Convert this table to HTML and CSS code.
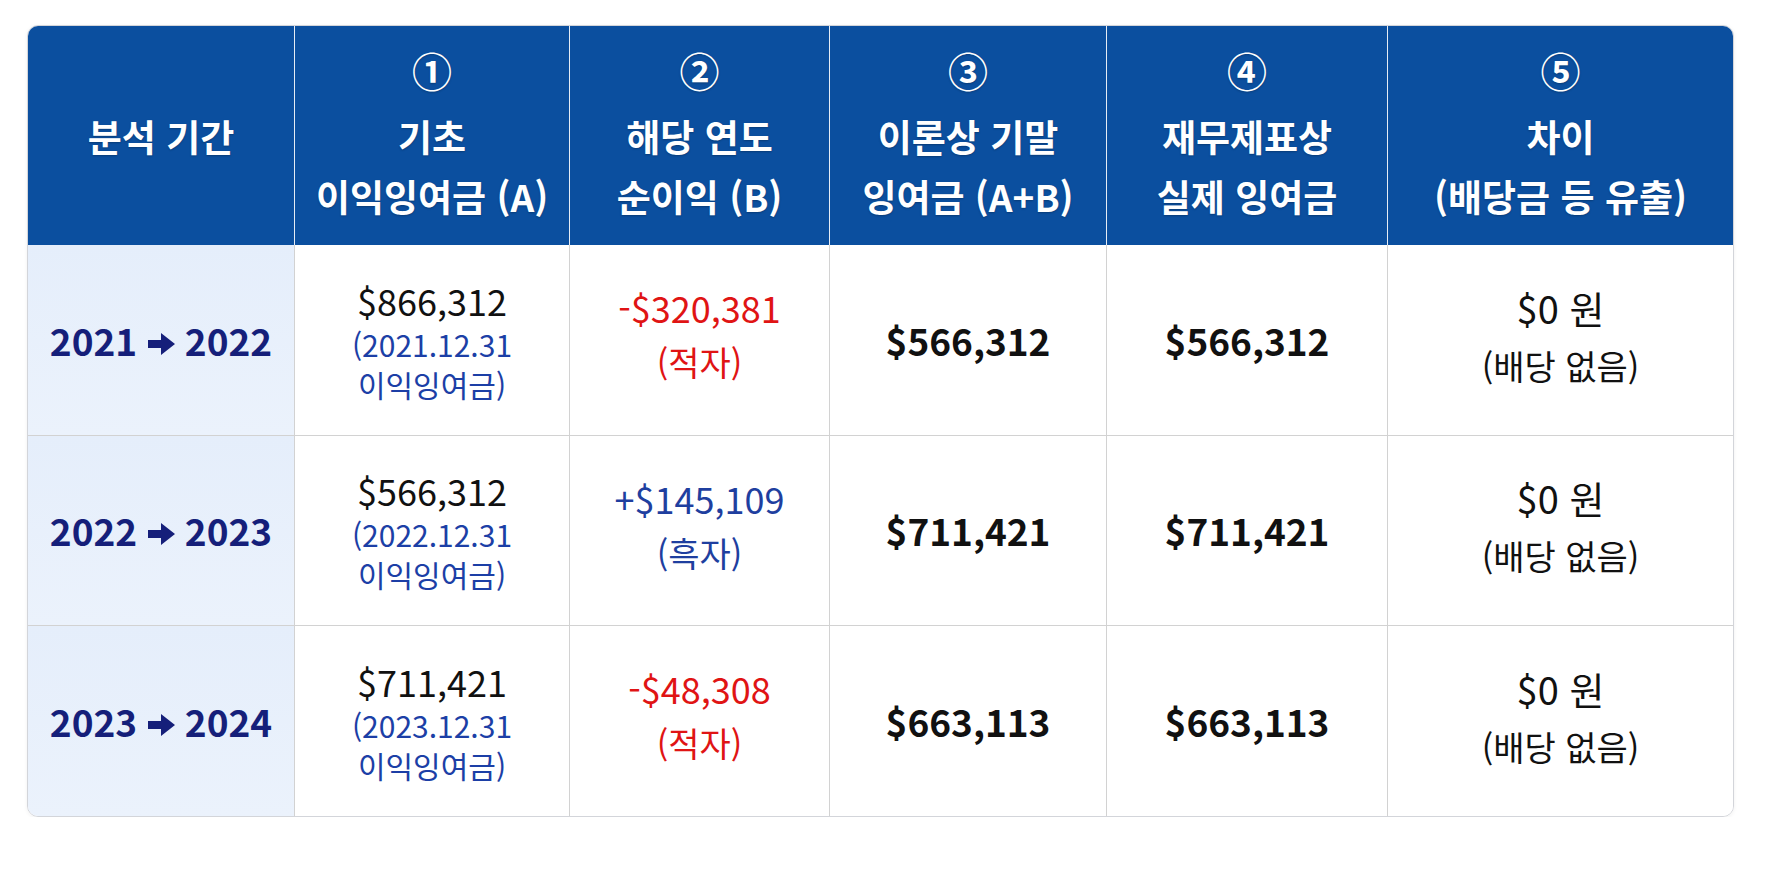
FILE: index.html
```html
<!DOCTYPE html>
<html lang="ko">
<head>
<meta charset="utf-8">
<title>이익잉여금 분석</title>
<link rel="stylesheet" href="styles.css">
</head>
<body>
<div class="wrap">
<table class="re-table">
  <colgroup>
    <col class="c1"><col class="c2"><col class="c3"><col class="c4"><col class="c5"><col class="c6">
  </colgroup>
  <thead>
    <tr>
      <th><span class="hl">분석 기간</span></th>
      <th><span class="num">①</span><span class="hl">기초</span><span class="hl">이익잉여금 (A)</span></th>
      <th><span class="num">②</span><span class="hl">해당 연도</span><span class="hl">순이익 (B)</span></th>
      <th><span class="num">③</span><span class="hl">이론상 기말</span><span class="hl">잉여금 (A+B)</span></th>
      <th><span class="num">④</span><span class="hl">재무제표상</span><span class="hl">실제 잉여금</span></th>
      <th><span class="num">⑤</span><span class="hl">차이</span><span class="hl">(배당금 등 유출)</span></th>
    </tr>
  </thead>
  <tbody>
    <tr>
      <td class="period">2021 <svg class="arrow" viewBox="0 0 27 24" aria-hidden="true"><path d="M0 8h13V1l14 11-14 11v-7H0z"/></svg> 2022</td>
      <td><div class="main">$866,312</div><div class="sub">(2021.12.31</div><div class="sub">이익잉여금)</div></td>
      <td class="neg"><div class="main">-$320,381</div><div class="tag">(적자)</div></td>
      <td class="bold">$566,312</td>
      <td class="bold">$566,312</td>
      <td class="div"><div class="main">$0 원</div><div class="tag">(배당 없음)</div></td>
    </tr>
    <tr>
      <td class="period">2022 <svg class="arrow" viewBox="0 0 27 24" aria-hidden="true"><path d="M0 8h13V1l14 11-14 11v-7H0z"/></svg> 2023</td>
      <td><div class="main">$566,312</div><div class="sub">(2022.12.31</div><div class="sub">이익잉여금)</div></td>
      <td class="pos"><div class="main">+$145,109</div><div class="tag">(흑자)</div></td>
      <td class="bold">$711,421</td>
      <td class="bold">$711,421</td>
      <td class="div"><div class="main">$0 원</div><div class="tag">(배당 없음)</div></td>
    </tr>
    <tr>
      <td class="period">2023 <svg class="arrow" viewBox="0 0 27 24" aria-hidden="true"><path d="M0 8h13V1l14 11-14 11v-7H0z"/></svg> 2024</td>
      <td><div class="main">$711,421</div><div class="sub">(2023.12.31</div><div class="sub">이익잉여금)</div></td>
      <td class="neg"><div class="main">-$48,308</div><div class="tag">(적자)</div></td>
      <td class="bold">$663,113</td>
      <td class="bold">$663,113</td>
      <td class="div"><div class="main">$0 원</div><div class="tag">(배당 없음)</div></td>
    </tr>
  </tbody>
</table>
</div>
</body>
</html>
```
FILE: styles.css
```css
html, body {
  margin: 0;
  padding: 0;
  background: #ffffff;
}
body {
  font-family: "Noto Sans CJK KR", "Noto Sans", sans-serif;
  color: #111111;
}
.wrap {
  padding: 25px 42px 0 27px;
}
.re-table {
  width: 1705px;
  table-layout: fixed;
  border-collapse: separate;
  border-spacing: 0;
  border: 1.5px solid #d3d5da;
  border-radius: 11px;
  overflow: hidden;
  box-shadow: 0 1px 4px rgba(0, 0, 0, 0.06);
}
.c1 { width: 267px; }
.c2 { width: 275px; }
.c3 { width: 260px; }
.c4 { width: 277px; }
.c5 { width: 281px; }
.c6 { width: 345px; }

.re-table th {
  height: 219px;
  background: #0b4f9f;
  color: #ffffff;
  font-weight: 700;
  font-size: 37px;
  line-height: 60px;
  text-align: center;
  vertical-align: middle;
  padding: 0;
  border-right: 1.5px solid #e6ecf5;
  text-shadow: 0 1px 2px rgba(0, 0, 0, 0.25);
}
.re-table th:last-child { border-right: none; }
.re-table th span { display: block; }
.re-table th .num {
  font-weight: 700;
  font-size: 40px;
  line-height: 60px;
  margin-top: -6px;
  margin-bottom: 6px;
}

.re-table td {
  height: 189.5px;
  padding: 0;
  text-align: center;
  vertical-align: middle;
  font-size: 36px;
  background: #ffffff;
  border-right: 1.5px solid #d2d2d2;
  border-bottom: 1.5px solid #d2d2d2;
}
.re-table td:last-child { border-right: none; }
.re-table tbody tr:last-child td { border-bottom: none; }

.re-table td.period {
  background: linear-gradient(180deg, #e5eefb 0%, #ebf2fc 100%);
  color: #151f7a;
  font-weight: 700;
  font-size: 37px;
  white-space: nowrap;
}
.arrow {
  width: 27px;
  height: 24px;
  fill: #151f7a;
  vertical-align: 0;
}
.main {
  font-size: 36px;
  line-height: 48px;
}
.sub {
  font-size: 30px;
  line-height: 40px;
  color: #1c3fa6;
}
.tag {
  font-size: 34px;
  line-height: 50px;
  margin-top: 6px;
}
.neg .tag,
.pos .tag {
  margin-bottom: 9px;
}
.div .main {
  font-size: 38px;
  line-height: 50px;
}
.div .tag {
  margin-top: 8px;
  margin-bottom: 6px;
}
.neg { color: #e01414; }
.pos { color: #1f3f9f; }
.re-table td.bold {
  font-weight: 700;
  font-size: 37px;
  color: #111111;
}
```
